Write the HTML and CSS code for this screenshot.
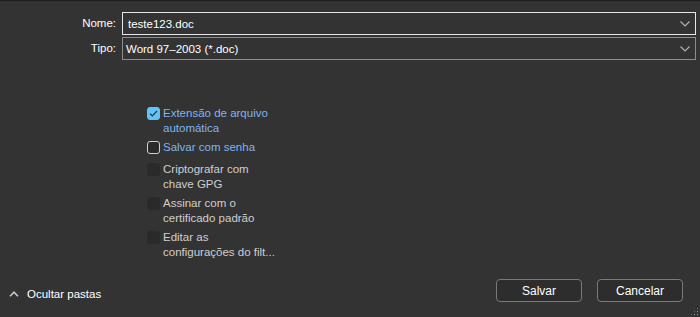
FILE: index.html
```html
<!DOCTYPE html>
<html lang="pt">
  <head>
    <meta charset="utf-8">
    <title>Salvar como</title>
    <link rel="stylesheet" href="styles.css">
  </head>
  <body>
  <div class="dialog">
      <div class="fields">
          <label class="field-label" for="f_name">Nome:</label>
          <div class="combo active">
              <span class="combo-value" id="f_name">teste123.doc</span>
              <svg class="chevron" width="10" height="6" viewBox="0 0 10 6"><path d="M0.5 0.5 L5 5 L9.5 0.5" fill="none" stroke="#b4b4b4" stroke-width="1.1"/></svg>
          </div>
          <label class="field-label" for="f_type">Tipo:</label>
          <div class="combo">
              <span class="combo-value type" id="f_type">Word 97–2003 (*.doc)</span>
              <svg class="chevron" width="10" height="6" viewBox="0 0 10 6"><path d="M0.5 0.5 L5 5 L9.5 0.5" fill="none" stroke="#b4b4b4" stroke-width="1.1"/></svg>
          </div>
      </div>

      <div class="options">
          <div class="option enabled">
              <span class="box checked">
                  <svg width="9" height="7" viewBox="0 0 9 7"><path d="M1 3.6 L3.3 5.8 L8 1" fill="none" stroke="#1d3a4d" stroke-width="1.2"/></svg>
              </span>
              <span class="option-text">Extensão de arquivo<br>automática</span>
          </div>
          <div class="option enabled">
              <span class="box"></span>
              <span class="option-text">Salvar com senha</span>
          </div>
          <div class="option disabled gap">
              <span class="box"></span>
              <span class="option-text">Criptografar com<br>chave GPG</span>
          </div>
          <div class="option disabled">
              <span class="box"></span>
              <span class="option-text">Assinar com o<br>certificado padrão</span>
          </div>
          <div class="option disabled">
              <span class="box"></span>
              <span class="option-text">Editar as<br>configurações do filt...</span>
          </div>
      </div>

      <div class="footer">
          <div class="toggle">
              <svg width="10" height="6" viewBox="0 0 10 6"><path d="M1 5.2 L5 1.2 L9 5.2" fill="none" stroke="#c8c8c8" stroke-width="1.6"/></svg>
              <span>Ocultar pastas</span>
          </div>
          <div class="actions">
              <button>Salvar</button>
              <button>Cancelar</button>
          </div>
      </div>
      <div class="grip"></div>
  </div>
  </body>
</html>
```

FILE: styles.css
```css
/* base */
html, body {
    margin: 0;
    background-color: #333333;
}

body {
    font-family: "Liberation Sans", Arial, sans-serif;
    font-size: 11.5px;
    color: #ffffff;
}

/* dialog frame */
.dialog {
    position: relative;
    height: 316px;
    border-top: 1px solid #1e1e1e;
    display: flex;
    flex-direction: column;
}

/* name / type rows */
.fields {
    display: grid;
    grid-template-columns: 116px 1fr;
    column-gap: 6px;
    row-gap: 2px;
    padding: 11px 4px 0 0;
}

.field-label {
    text-align: right;
    line-height: 23px;
}

.combo {
    height: 21px;
    border: 1px solid #8c8c8c;
    display: flex;
    align-items: center;
    justify-content: space-between;
    padding: 0 5px 0 3px;
}
.combo.active {
    border-color: #e6e6e6;
    padding-left: 5px;
}

.chevron {
    margin-top: 1px;
}

/* checkbox list */
.options {
    margin: 46px 0 0 147px;
    display: flex;
    flex-direction: column;
}

.option {
    display: flex;
    align-items: flex-start;
    margin-bottom: 4px;
}
.option.gap {
    margin-top: 3px;
}

.option-text {
    line-height: 15px;
    padding-left: 3px;
}

.box {
    width: 11px;
    height: 11px;
    margin-top: 1px;
    border: 1px solid #d0d0d0;
    border-radius: 3px;
    background-color: #2a2a2a;
    display: flex;
    align-items: center;
    justify-content: center;
    flex-shrink: 0;
}
.box.checked {
    border-color: #62c3f5;
    background-color: #62c3f5;
}

.enabled .option-text {
    color: #7fb3ee;
}

.disabled .box {
    border-color: #2a2a2a;
}
.disabled .option-text {
    color: #cfcfcf;
}

/* bottom bar */
.footer {
    margin-top: auto;
    display: flex;
    justify-content: space-between;
    align-items: center;
    padding: 0 17px 15px 9px;
}

.toggle {
    display: flex;
    align-items: center;
    gap: 8px;
    margin-top: 6px;
}

.actions {
    display: flex;
    gap: 15px;
}

button {
    width: 86px;
    height: 23px;
    padding: 0;
    font-family: inherit;
    font-size: 12px;
    color: #ffffff;
    background-color: #2d2d2d;
    border: 1px solid #7a7a7a;
    border-radius: 4px;
}

/* resize grip in corner */
.grip {
    position: absolute;
    right: 1px;
    bottom: 1px;
    width: 9px;
    height: 9px;
    background-image: radial-gradient(#9a9a9a 0.9px, transparent 1px);
    background-size: 3px 3px;
    clip-path: polygon(100% 0, 100% 100%, 0 100%);
}
```
